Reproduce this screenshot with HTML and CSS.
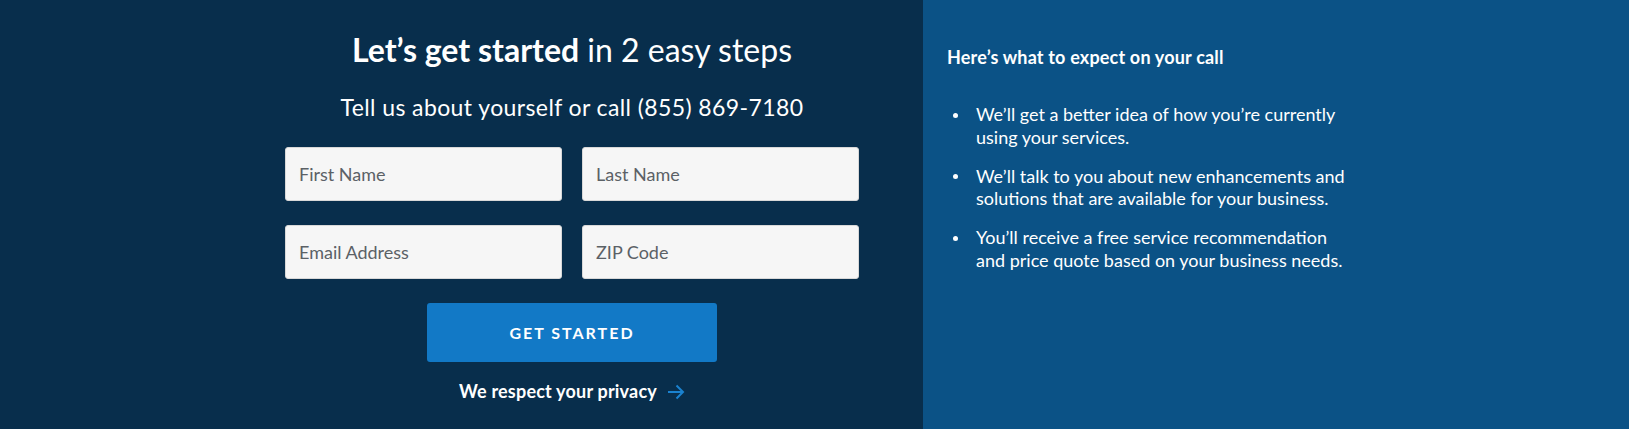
FILE: index.html
```html
<!DOCTYPE html>
<html lang="en">
<head>
<meta charset="utf-8">
<title>Let's get started</title>
<link rel="stylesheet" href="styles.css">
</head>
<body>
<div class="page">
  <section class="lead">
    <div class="lead-inner">
      <h1 class="title"><strong>Let’s get started</strong> in 2 easy steps</h1>
      <p class="subtitle">Tell us about yourself or call (855) 869-7180</p>
      <form class="form">
        <div class="fields">
          <input class="field" type="text" placeholder="First Name">
          <input class="field" type="text" placeholder="Last Name">
          <input class="field" type="email" placeholder="Email Address">
          <input class="field" type="text" placeholder="ZIP Code">
        </div>
        <button class="submit" type="button">GET STARTED</button>
      </form>
      <a class="privacy" href="#">We respect your privacy
        <svg class="arrow" width="18" height="16" viewBox="0 0 18 16" aria-hidden="true"><path d="M1 8H16M9.5 1.5L16 8L9.5 14.5" fill="none" stroke="#1a82cf" stroke-width="2"/></svg>
      </a>
    </div>
  </section>
  <aside class="expect">
    <h2 class="expect-title">Here’s what to expect on your call</h2>
    <ul class="expect-list">
      <li>We’ll get a better idea of how you’re currently<br>using your services.</li>
      <li>We’ll talk to you about new enhancements and<br>solutions that are available for your business.</li>
      <li>You’ll receive a free service recommendation<br>and price quote based on your business needs.</li>
    </ul>
  </aside>
</div>
</body>
</html>
```
FILE: styles.css
```css
* { box-sizing: border-box; }
html, body { margin: 0; padding: 0; }
body {
  font-family: Lato, "Liberation Sans", sans-serif;
  color: #fff;
  background: #082e4c;
}
.page {
  display: flex;
  height: 429px;
}
.lead {
  width: 923px;
  flex: none;
  background: #082e4c;
  padding: 30px 64px 0 285px;
}
.lead-inner {
  width: 574px;
  display: flex;
  flex-direction: column;
  align-items: center;
}
.title {
  margin: 0;
  font-size: 32px;
  line-height: 40px;
  font-weight: 400;
  white-space: nowrap;
}
.title strong { font-weight: 700; }
.subtitle {
  margin: 22px 0 0;
  font-size: 23px;
  letter-spacing: 0.4px;
  line-height: 30px;
  white-space: nowrap;
}
.form {
  margin-top: 25px;
  width: 100%;
  display: flex;
  flex-direction: column;
  align-items: center;
}
.fields {
  width: 100%;
  display: grid;
  grid-template-columns: 277px 277px;
  column-gap: 20px;
  row-gap: 24px;
}
.field {
  height: 54px;
  margin: 0;
  padding: 0 13px;
  border: 1px solid #d8d8d8;
  border-radius: 3px;
  background: #f6f6f6;
  font-family: inherit;
  font-size: 18px;
  color: #333;
  outline: none;
}
.field::placeholder { color: #5b6166; }
.submit {
  margin-top: 24px;
  width: 290px;
  height: 59px;
  border: none;
  border-radius: 3px;
  background: #1279c6;
  color: #fff;
  font-family: inherit;
  font-weight: 700;
  font-size: 16px;
  letter-spacing: 2px;
  padding: 0;
}
.privacy {
  margin-top: 17px;
  display: flex;
  align-items: center;
  gap: 10px;
  color: #fff;
  text-decoration: none;
  font-weight: 700;
  font-size: 18px;
  letter-spacing: 0.2px;
  line-height: 24px;
}
.arrow { display: block; margin-top: 1px; }
.expect {
  flex: 1;
  background: #0b5286;
  padding: 45px 0 0 24px;
}
.expect-title {
  margin: 0;
  font-size: 18px;
  letter-spacing: 0.18px;
  line-height: 24px;
  font-weight: 700;
}
.expect-list {
  list-style: none;
  margin: 34px 0 0;
  padding: 0;
}
.expect-list li {
  display: flex;
  font-size: 18px;
  line-height: 22.5px;
  margin-bottom: 16.5px;
}
.expect-list li::before {
  content: "";
  flex: none;
  width: 5px;
  height: 5px;
  border-radius: 50%;
  background: #fff;
  margin: 9.5px 18px 0 6px;
}
```
